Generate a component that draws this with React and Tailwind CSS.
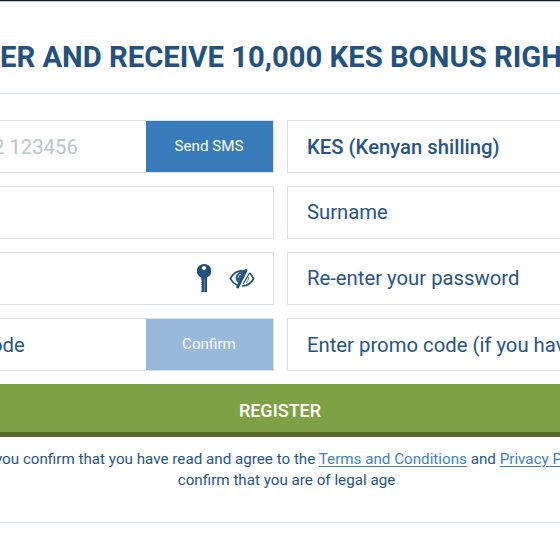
import React from 'react';

const KeyIcon = () => (
  <svg className="h-[29px] w-[14px] shrink-0" viewBox="0 0 14 29" fill="#22517f">
    <path
      fillRule="evenodd"
      d="M7 0a7 7 0 0 1 3 13.4V28H4.2v-1.4h.8v-1H4.2v-1.2h.8v-1H4.2v-1.2h.8v-1H4.2V20h.8v-1H4.2v-1.4h.8v-1H4.2v-3.1A7 7 0 0 1 7 0Zm0 2a2.1 2.1 0 1 0 0 4.2A2.1 2.1 0 0 0 7 2Z"
    />
    <path d="M7.4 15v13" stroke="white" strokeOpacity="0.45" strokeWidth="0.7" />
  </svg>
);

const HiddenEyeIcon = () => (
  <svg className="h-[20px] w-[26px] shrink-0" viewBox="0 0 26 20" fill="none" stroke="#22517f" strokeLinecap="round">
    <path d="M15.4 2.2C9.5 1 4.4 4 1.3 9.6c1.7 3 3.8 5 6.3 6.2" strokeWidth="1.8" />
    <path d="M20.8 4.4c1.5 1.3 2.7 3 3.8 5.2-2.4 4.8-6.2 7.1-10.8 7.3" strokeWidth="1.8" />
    <path d="M14.8 3.1C10 2.2 6.9 5.7 7.2 9.3c.1 1.6.6 2.9 1.5 3.8Z" fill="#22517f" strokeWidth="1" />
    <path d="M17 1.4 8.7 18" strokeWidth="2.8" />
    <path d="M9.1 8.4c.1-1.8 1-2.8 2.5-3.2" stroke="white" strokeWidth="0.9" />
    <path d="m20.1 4.8-5.7 9.8" strokeWidth="1.1" />
    <path d="M19.5 8.5c0 2.2-.8 3.8-2.3 5" strokeWidth="0.8" />
  </svg>
);

const Field = ({ children, className = '' }) => (
  <div className={`flex h-[53px] items-center overflow-hidden border border-[#dce0e4] bg-white text-[20.3px] whitespace-nowrap text-[#285583] ${className}`}>
    {children}
  </div>
);

const FieldButton = ({ label, color }) => (
  <button className={`ml-auto h-full w-[127px] shrink-0 pr-px text-[15.2px] text-white ${color}`}>{label}</button>
);

const App = () => {
  return (
    <div className="h-[560px] w-[560px] overflow-hidden border-t border-[#101c31] bg-white font-['Roboto',sans-serif] text-[#285583]">
      <header className="flex h-[93px] items-center overflow-hidden border-t border-b border-t-[#c5cad3] border-b-[#dfe7f0] pt-[21px] pb-0">
        <h1 className="text-[29.25px] leading-none font-bold whitespace-nowrap text-[#24517f]">
          ER AND RECEIVE 10,000 KES BONUS RIGHT
        </h1>
      </header>

      <main className="pt-[26px]">
        <div className="grid grid-cols-[274px_273px] gap-x-[13px] gap-y-[13px]">
          <Field className="border-l-0">
            <span className="-ml-[7px] pt-px text-[#bcc4ce]">2 123456</span>
            <FieldButton label="Send SMS" color="bg-[#377bba]" />
          </Field>
          <Field className="border-r-0 pt-px pl-[19px] font-medium">KES (Kenyan shilling)</Field>

          <Field className="border-l-0" />
          <Field className="border-r-0 pl-[19px]">Surname</Field>

          <Field className="justify-end gap-[18px] border-l-0 pr-[18px]">
            <KeyIcon />
            <HiddenEyeIcon />
          </Field>
          <Field className="border-r-0 pl-[19px]">Re-enter your password</Field>

          <Field className="border-l-0">
            <span className="-ml-[9px] pt-px">ode</span>
            <FieldButton label="Confirm" color="bg-[#98b9dc]" />
          </Field>
          <Field className="border-r-0 pt-px pl-[19px]">Enter promo code (if you have</Field>
        </div>

        <button className="mt-[13px] block h-[53px] w-full border-b-[5px] border-[#576c2d] bg-[#7fa145] pt-[5px] text-[18px] font-medium text-white">
          REGISTER
        </button>

        <div className="h-[86px] overflow-hidden border-b border-[#dceaf7] pt-[12px] text-[15.2px] leading-[20.5px]">
          <p className="-ml-[5px] whitespace-nowrap">
            you confirm that you have read and agree to the{' '}
            <a className="text-[#3f82c4] underline underline-offset-2">Terms and Conditions</a> and{' '}
            <a className="text-[#3f82c4] underline underline-offset-2">Privacy Policy</a>
          </p>
          <p className="pl-[13px] text-center">confirm that you are of legal age</p>
        </div>
      </main>
    </div>
  );
};

export default App;
